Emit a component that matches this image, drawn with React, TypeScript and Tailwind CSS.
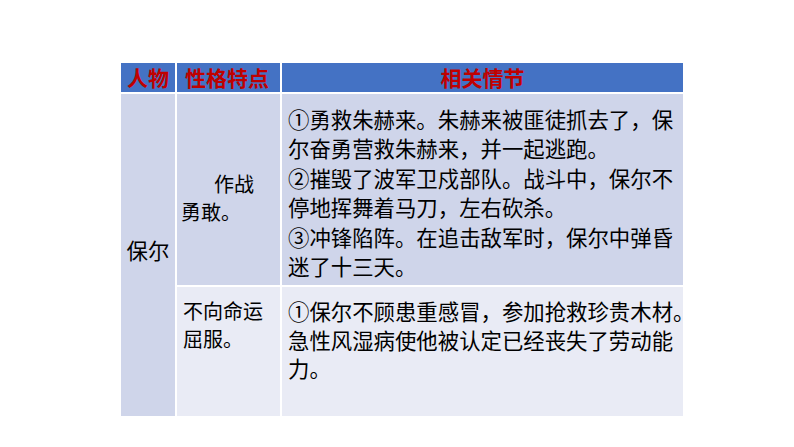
import React from "react";

const font = { fontFamily: '"Noto Sans CJK SC", "Noto Sans", sans-serif' };

const row1 = [
  "①勇救朱赫来。朱赫来被匪徒抓去了，保",
  "尔奋勇营救朱赫来，并一起逃跑。",
  "②摧毁了波军卫戍部队。战斗中，保尔不",
  "停地挥舞着马刀，左右砍杀。",
  "③冲锋陷阵。在追击敌军时，保尔中弹昏",
  "迷了十三天。",
];

const row2 = [
  "①保尔不顾患重感冒，参加抢救珍贵木材。",
  "急性风湿病使他被认定已经丧失了劳动能",
  "力。",
];

function Lines({ lines }: { lines: string[] }) {
  return (
    <>
      {lines.map((l, i) => (
        <div key={i} className="whitespace-nowrap">
          {l}
        </div>
      ))}
    </>
  );
}

export default function App() {
  return (
    <div className="w-[794px] h-[447px] bg-white pt-[63px] pl-[121px]" style={font}>
      <div className="grid w-[562px] grid-cols-[54px_103px_401px] grid-rows-[29px_191px_129px] gap-x-[2px] gap-y-[2px] text-[21.4px] leading-[29.4px] text-black">
        {/* 表头 */}
        <div className="bg-[#4472c4] flex items-center justify-center font-bold text-[#c00000] text-[21px] whitespace-nowrap">
          人物
        </div>
        <div className="bg-[#4472c4] flex items-center pl-[8px] font-bold text-[#c00000] text-[21px] whitespace-nowrap">
          性格特点
        </div>
        <div className="bg-[#4472c4] flex items-center justify-center font-bold text-[#c00000] text-[21px]">
          相关情节
        </div>

        {/* 人物 */}
        <div className="row-span-2 bg-[#cfd5ea] flex items-center justify-center pb-[10px] whitespace-nowrap">
          保尔
        </div>

        {/* 第一行 */}
        <div className="bg-[#cfd5ea] pt-[76px] px-[4px] text-[20px] leading-[28px]">
          <div className="pl-[33px]">作战</div>
          <div>勇敢。</div>
        </div>
        <div className="bg-[#cfd5ea] pt-[10px] pl-[6px] min-w-0">
          <Lines lines={row1} />
        </div>

        {/* 第二行 */}
        <div className="bg-[#e9ebf5] pt-[10px] px-[6px] text-[20px] leading-[28px]">
          <div>不向命运</div>
          <div>屈服。</div>
        </div>
        <div className="bg-[#e9ebf5] pt-[10px] pl-[6px] leading-[28.5px] min-w-0">
          <Lines lines={row2} />
        </div>
      </div>
    </div>
  );
}
